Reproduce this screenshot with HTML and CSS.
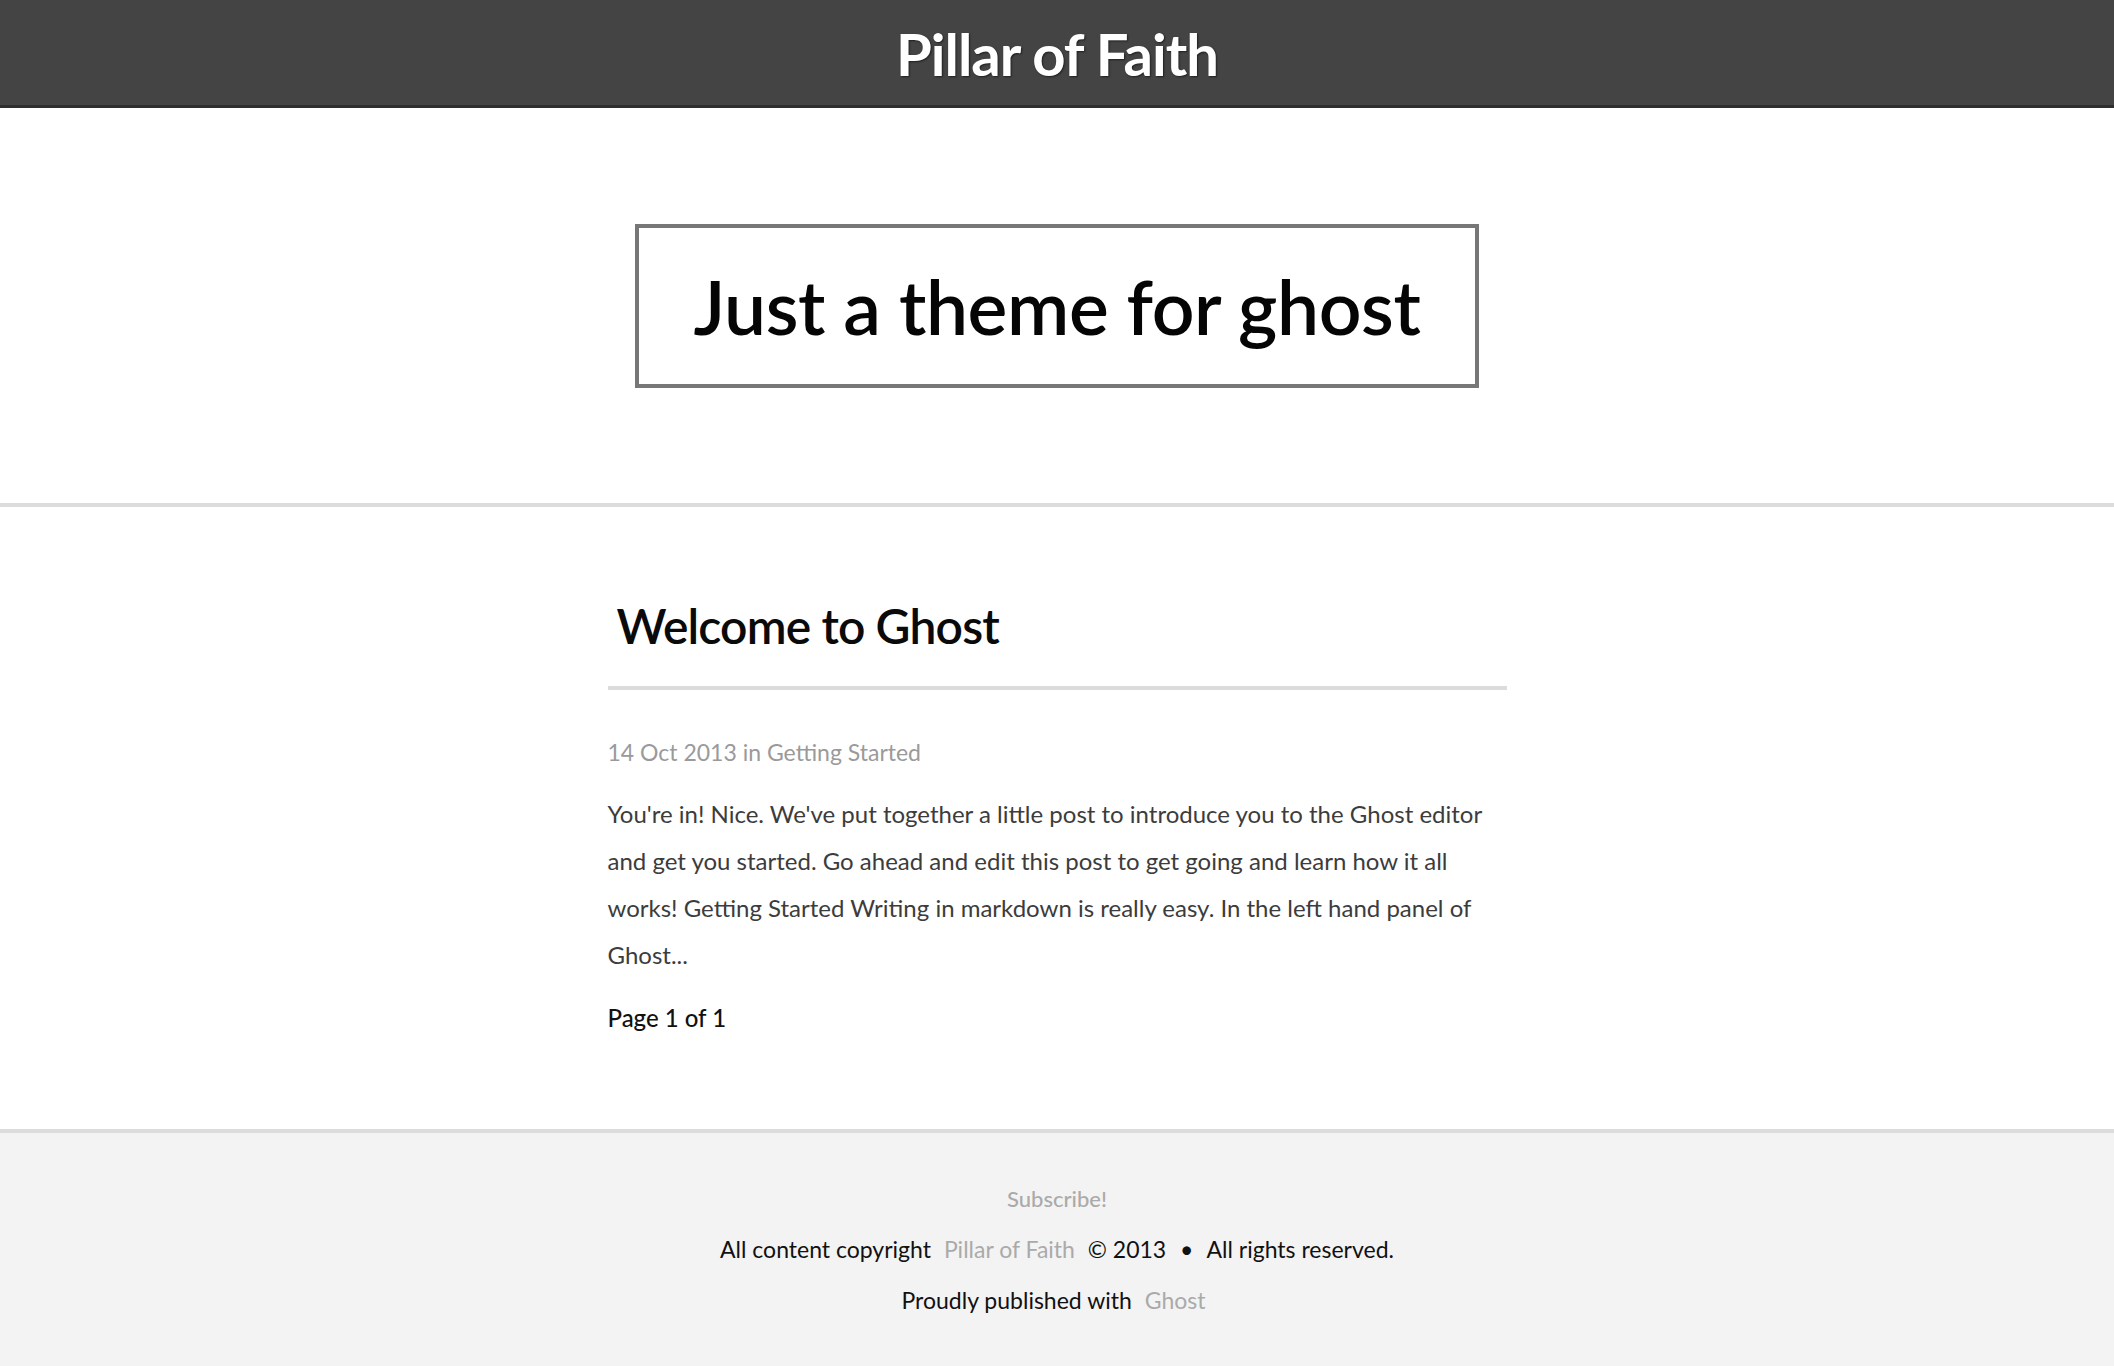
FILE: index.html
```html
<!DOCTYPE html>
<html lang="en">
<head>
<meta charset="utf-8">
<title>Pillar of Faith</title>
<link rel="stylesheet" href="styles.css">
</head>
<body>
<header class="site-header">
  <h1 class="site-title">Pillar of Faith</h1>
</header>
<section class="hero">
  <div class="tagline">Just a theme for ghost</div>
</section>
<main class="content">
  <article class="post">
    <h2 class="post-title">Welcome to Ghost</h2>
    <p class="post-meta">14 Oct 2013 in Getting Started</p>
    <p class="post-excerpt">You're in! Nice. We've put together a little post to introduce you to the Ghost editor and get you started. Go ahead and edit this post to get going and learn how it all works! Getting Started Writing in markdown is really easy. In the left hand panel of Ghost...</p>
  </article>
  <nav class="pagination">Page 1 of 1</nav>
</main>
<footer class="site-footer">
  <p class="footer-line"><a class="footer-link subscribe" href="#">Subscribe!</a></p>
  <p class="footer-line">All content copyright <a class="footer-link spaced" href="#">Pillar of Faith</a> © 2013 <span class="bullet">•</span> All rights reserved.</p>
  <p class="footer-line">Proudly published with <a class="footer-link spaced" href="#">Ghost</a></p>
</footer>
</body>
</html>
```
FILE: styles.css
```css
html, body {
  margin: 0;
  padding: 0;
}

body {
  font-family: "Lato", "Liberation Sans", sans-serif;
  color: #111;
  background: #fff;
}

.site-header {
  background: #444;
  height: 105px;
  border-bottom: 3px solid #2e2e2e;
  display: flex;
  align-items: center;
  justify-content: center;
}

.site-title {
  margin: 0;
  padding-top: 3px;
  font-size: 58px;
  font-weight: 700;
  letter-spacing: -1px;
  line-height: 1;
  color: #fff;
  text-shadow: 1px 1px 2px rgba(0, 0, 0, 0.55);
}

.hero {
  padding: 116px 0 115px;
  text-align: center;
  border-bottom: 4px solid #dcdcdc;
}

.tagline {
  display: inline-block;
  border: 4px solid #777;
  padding: 0 55px;
  height: 156px;
  line-height: 156px;
  font-size: 75px;
  font-weight: 600;
  letter-spacing: -0.4px;
  color: #050505;
}

.content {
  width: 899px;
  margin: 0 auto;
  padding: 90px 0 93px;
}

.post-title {
  margin: 0;
  padding: 0 0 31px 9px;
  border-bottom: 4px solid #dcdcdc;
  font-size: 48px;
  line-height: 57.6px;
  font-weight: 600;
  letter-spacing: -0.85px;
  color: #0a0a0a;
}

.post-meta {
  margin: 45px 0 0;
  font-size: 23px;
  line-height: 34px;
  color: #9a9a9a;
}

.post-excerpt {
  margin: 21px 0 0;
  font-size: 24px;
  line-height: 47px;
  color: #3c3c3c;
}

.pagination {
  margin-top: 22px;
  font-size: 24px;
  line-height: 36px;
  font-weight: 500;
  color: #111;
}

.site-footer {
  background: #f3f3f3;
  border-top: 4px solid #dcdcdc;
  padding: 40px 0 40px;
  text-align: center;
}

.footer-line {
  margin: 0;
  font-size: 23px;
  line-height: 51px;
  color: #111;
}

.footer-link {
  color: #aaa;
  text-decoration: none;
}

.subscribe {
  font-size: 22px;
  font-weight: 500;
}

.spaced {
  margin: 0 7px;
}

.bullet {
  margin: 0 8px;
}
```
